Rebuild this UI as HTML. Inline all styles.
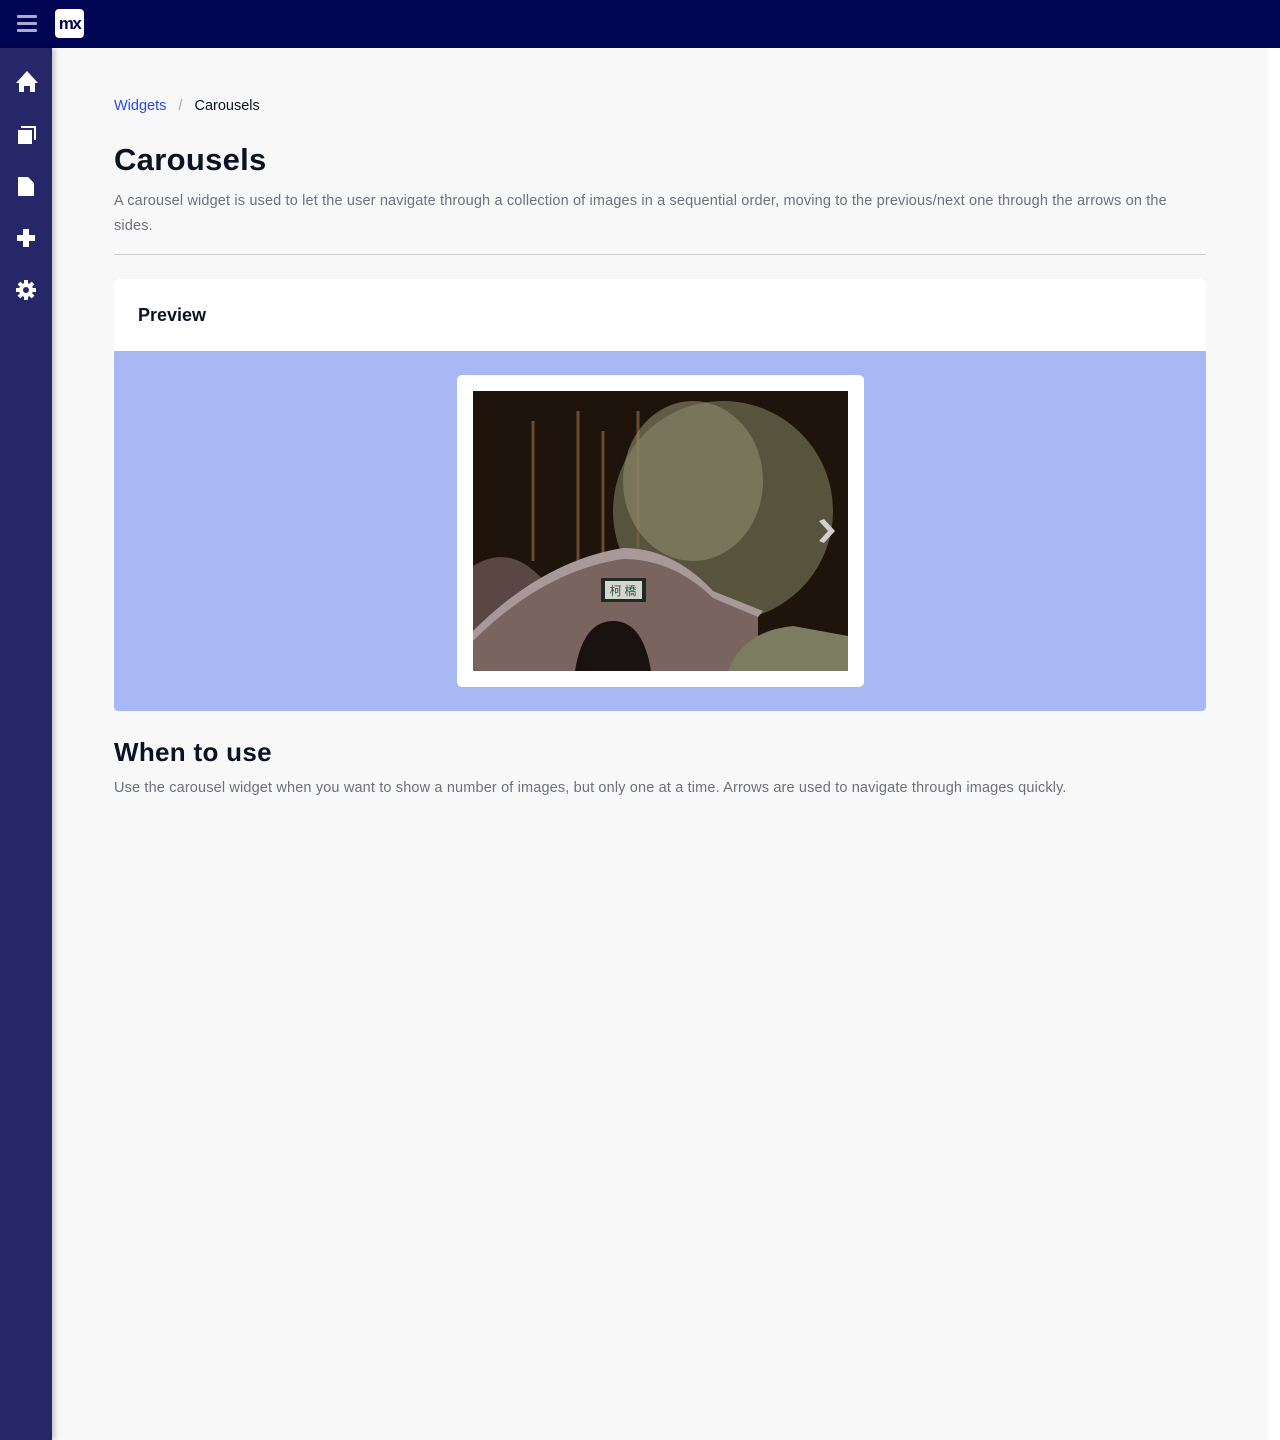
<!DOCTYPE html>
<html><head><meta charset="utf-8"><style>
*{margin:0;padding:0;box-sizing:border-box}
body{width:1280px;height:1440px;background:#f8f8f8;font-family:"Liberation Sans",sans-serif;position:relative;overflow:hidden}
.top{position:absolute;left:0;top:0;width:1280px;height:48px;background:#020553}
.side{position:absolute;left:0;top:48px;width:52px;height:1392px;background:#252769;box-shadow:2px 0 6px rgba(0,0,0,.25)}
.rs{position:absolute;right:0;top:48px;width:12px;height:1392px;background:#fff}
.logo{position:absolute;left:55px;top:9px;width:29px;height:29px;background:#fff;border-radius:4px;color:#020553;font-weight:bold;font-size:17px;line-height:29px;text-align:center;letter-spacing:-1.5px}
.ham{position:absolute;left:17px;top:15px;width:20px}
.ham i{display:block;height:3px;background:#a9abd0;margin-bottom:4px;border-radius:1px}
.crumb{position:absolute;left:114px;top:98px;font-size:14.5px;color:#0a1326}
.crumb a{color:#264ae5}
h1{position:absolute;left:114px;top:142px;font-size:31px;font-weight:600;color:#0a1326;letter-spacing:.3px}
.desc{position:absolute;left:114px;top:189px;width:1100px;font-size:14.5px;line-height:25px;color:#6c717e;letter-spacing:.15px}
.hr{position:absolute;left:114px;top:254px;width:1092px;height:1px;background:#ced0d3}
.card{position:absolute;left:114px;top:279px;width:1092px;height:432px;border-radius:4px;overflow:hidden;background:#a8b8f5}
.ch{height:72px;background:#fff;padding:26px 24px;font-size:18px;font-weight:bold;color:#0a1326}
.frame{position:absolute;left:343px;top:96px;width:407px;height:312px;background:#fff;border-radius:5px}
h2{position:absolute;left:114px;top:737px;font-size:26px;font-weight:600;color:#0a1326;letter-spacing:.3px}
.p2{position:absolute;left:114px;top:780px;font-size:14.5px;color:#6c717e;letter-spacing:.15px}
</style></head><body>
<div class="top"><div class="ham"><i></i><i></i><i></i></div><div class="logo">mx</div></div>
<div class="side">
<svg width="52" height="300" viewBox="0 0 52 300" fill="#fff">
<path d="M16 35 L27 23 L38 35 H35 V44 H30 V38 H24 V44 H19 V35Z"/>
<path d="M18 82 H32 V96 H18Z"/><path d="M21 78 H36 V92 H34 V80 H21Z"/>
<path d="M18 129 H28 L34 135 V148 H18Z"/>
<path d="M23 181 H29 V187 H35 V193 H29 V199 H23 V193 H17 V187 H23Z"/>
<circle cx="26" cy="242" r="7"/><g stroke="#fff" stroke-width="4"><path d="M26 232V252M16 242H36M19 235L33 249M33 235L19 249"/></g><circle cx="26" cy="242" r="3" fill="#252769"/>
</svg></div>
<div class="rs"></div>
<div class="crumb"><a>Widgets</a> <span style="color:#aaa;margin:0 8px">/</span> Carousels</div>
<h1>Carousels</h1>
<div class="desc">A carousel widget is used to let the user navigate through a collection of images in a sequential order, moving to the previous/next one through the arrows on the<br>sides.</div>
<div class="hr"></div>
<div class="card"><div class="ch">Preview</div>
<div class="frame">
<svg style="position:absolute;left:16px;top:16px" width="375" height="280" viewBox="0 0 375 280">
<rect width="375" height="280" fill="#1e140c"/>
<g stroke="#6b4a2e" stroke-width="3"><path d="M105 20V180M130 40V170M165 20V170M60 30V170"/></g>
<ellipse cx="250" cy="120" rx="110" ry="110" fill="#6b684e" opacity=".75"/>
<ellipse cx="220" cy="90" rx="70" ry="80" fill="#8f8c70" opacity=".6"/>
<path d="M0 175 Q40 150 75 195 L75 280 H0Z" fill="#5a4642"/>
<path d="M0 245 Q70 175 150 160 Q200 160 240 205 L285 225 V280 H0Z" fill="#7a6460"/>
<path d="M0 240 Q70 170 150 157 Q200 157 240 200 L290 220 L285 226 L240 207 Q200 168 150 168 Q70 180 0 250Z" fill="#a8989a"/>
<path d="M102 280 Q110 230 140 230 Q170 230 178 280Z" fill="#1a1210"/>
<rect x="128" y="187" width="45" height="24" fill="#1e2a26"/><rect x="132" y="190" width="37" height="18" fill="#d8d5cc"/>
<text x="150" y="204" font-size="12" text-anchor="middle" fill="#2b5a50" font-family="Noto Sans CJK SC,sans-serif">柯 橋</text>
<path d="M255 280 Q270 240 320 235 L375 245 V280Z" fill="#7c7d60"/>
<path d="M346 130 L351 128 L362 140 L351 152 L346 150 L355 140Z" fill="#d0d0d0"/>
</svg></div></div>
<h2>When to use</h2>
<div class="p2">Use the carousel widget when you want to show a number of images, but only one at a time. Arrows are used to navigate through images quickly.</div>
</body></html>
